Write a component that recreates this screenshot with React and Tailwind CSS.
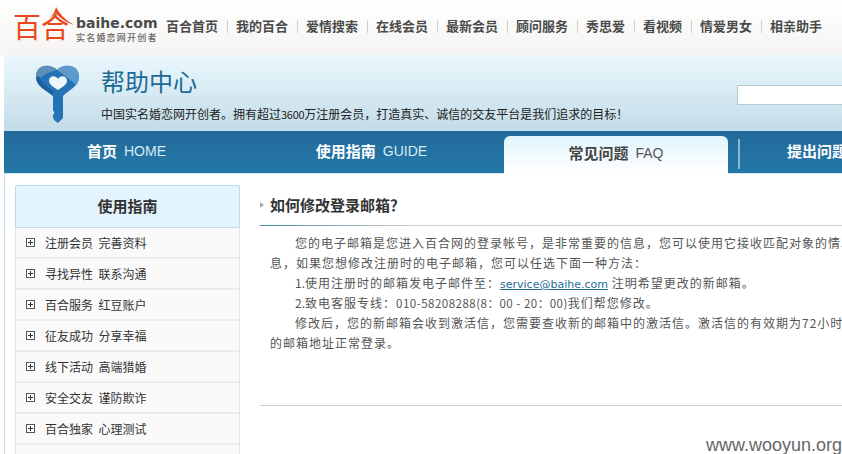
import React from 'react';

const cjk = "font-['Noto_Sans_CJK_SC','Liberation_Sans',sans-serif]";

const topLinks = [
    ['百合首页', 'w-[52px]'],
    ['我的百合', 'w-[52px]'],
    ['爱情搜索', 'w-[52px]'],
    ['在线会员', 'w-[52px]'],
    ['最新会员', 'w-[52px]'],
    ['顾问服务', 'w-[52px]'],
    ['秀思爱', 'w-[39px]'],
    ['看视频', 'w-[39px]'],
    ['情爱男女', 'w-[52px]'],
    ['相亲助手', 'w-[52px]'],
];

const sideItems = [
    '注册会员  完善资料',
    '寻找异性  联系沟通',
    '百合服务  红豆账户',
    '征友成功  分享幸福',
    '线下活动  高端猎婚',
    '安全交友  谨防欺诈',
    '百合独家  心理测试',
];

const Logo = () => (
    <div className="w-[166px] h-full pl-[13px] flex items-start relative">
        {/* 百合 wordmark */}
        <span className="mt-[8px] text-[28px] leading-[36px] font-normal tracking-[0px] text-[#e8481c] whitespace-nowrap">百合</span>
        <svg className="absolute left-[50px] top-[6px]" width="24" height="20" viewBox="0 0 24 20">
            <path d="M0 12 C3 9 5 5 6 1 C9 7 15 14 24 19 C15 16 9 11 6 7 C4 9 2 11 0 12 Z" fill="#e8481c" />
        </svg>
        <div className="ml-[7px] mt-[15px] flex flex-col">
            <span className="font-['DejaVu_Sans',sans-serif] font-bold text-[14px] leading-[17px] text-[#4a4a4a] whitespace-nowrap">baihe.com</span>
            <span className="text-[9px] leading-[11px] tracking-[1.200px] font-medium text-[#666] whitespace-nowrap">实名婚恋网开创者</span>
        </div>
    </div>
);

const KeyIcon = () => (
    <svg width="44" height="60" viewBox="0 0 44 60">
        <path d="M21 6 C26 0 43 -1 43 13 C43 22 33 26 27 32 L27 54 L22 59 L18 56 L16.500 52 L18.500 49 L17 46 L17 32 C10 26 0 22 0 13 C0 -1 16 0 21 6 Z" fill="#2473b5" />
        <path d="M21 6 C16 0 0 -1 0 13 C0 14 0 15 1 17 C6 11 13 8 21 6 Z" fill="#5f8fb9" />
        <path d="M21 6 C26 0 43 -1 43 13 C43 16 42 19 40 21 C35 16 28 11 21 6 Z" fill="#5e9bcb" />
        <path d="M0 13 C0 22 10 26 17 32 L17 27 C11 23 5 19 3 12 Z" fill="#1d5f9c" />
        <path d="M22 15 C24 11 31 11 31 17 C31 21 25 24 22 26 C19 24 13 21 13 17 C13 11 20 11 22 15 Z" fill="#eef6fa" />
    </svg>
);

const NavCell = ({ zh, en }) => (
    <div className="w-[245px] shrink-0 h-full flex items-center justify-center gap-[7px] pb-[1px] whitespace-nowrap">
        <span className="text-[15px] font-bold text-white">{zh}</span>
        <span className="font-['Liberation_Sans',sans-serif] text-[14px] text-[#d7ebf5]">{en}</span>
    </div>
);

const App = () => {
    return (
        <div className={`${cjk} relative w-[842px] h-[454px] overflow-hidden bg-white`}>
            {/* 顶部导航 */}
            <header className="h-[55px] flex bg-gradient-to-b from-white to-[#f5f4f2]">
                <Logo />
                <nav className="flex items-start pt-[17px]">
                    {topLinks.map(([label, w], i) => (
                        <div key={label} className="flex items-center">
                            {i > 0 && <span className="w-px h-[13px] bg-[#cfcfcf] ml-[9px] mr-[8px]" />}
                            <span className={`${w} text-[13px] leading-[18px] font-bold text-[#4a4a4a] whitespace-nowrap`}>{label}</span>
                        </div>
                    ))}
                </nav>
            </header>

            {/* 帮助中心 banner */}
            <div className="ml-[4px] h-[76px] flex bg-gradient-to-b from-[#ebf8fd] to-[#c3dce8]">
                <div className="w-[97px] shrink-0 pl-[32px] pt-[9px]">
                    <KeyIcon />
                </div>
                <div className="flex-1 pt-[9px] whitespace-nowrap">
                    <h1 className="text-[24px] leading-[34px] font-normal text-[#1b6a96]">帮助中心</h1>
                    <p className="mt-[7px] text-[12px] leading-[18px] text-[#222]">中国实名婚恋网开创者。拥有超过<span className="text-[11px] tracking-[-0.300px]">3600</span>万注册会员，打造真实、诚信的交友平台是我们追求的目标！</p>
                </div>
                <div className="pt-[30px]">
                    <input className="block w-[105px] h-[20px] bg-white border border-[#b5c8d2] border-r-0" />
                </div>
            </div>

            {/* 频道导航 */}
            <div className="ml-[4px] h-[43px] flex bg-gradient-to-b from-[#246a9b] to-[#2378a8] border-b border-[#cfe6ef]">
                <NavCell zh="首页" en="HOME" />
                <NavCell zh="使用指南" en="GUIDE" />
                <div className="w-[244px] shrink-0 px-[10px] h-[43px] flex items-end">
                    <div className="w-full h-[38px] rounded-t-[6px] bg-gradient-to-b from-[#e2f5fc] to-white flex items-center justify-center gap-[7px] pb-[3px]">
                        <span className="text-[15px] font-bold text-[#444]">常见问题</span>
                        <span className="font-['Liberation_Sans',sans-serif] text-[14px] text-[#555]">FAQ</span>
                    </div>
                </div>
                <span className="w-[2px] h-[30px] mt-[8px] bg-[#8fb9d0] shrink-0" />
                <div className="pl-[47px] h-full flex items-center pb-[1px] whitespace-nowrap">
                    <span className="text-[15px] font-bold text-white">提出问题</span>
                </div>
            </div>

            <div className="ml-[4px] h-[280px] flex border-l border-[#c5dbe5] pl-[10px] pt-[11px]">
                {/* 侧栏 */}
                <aside className="w-[225px] shrink-0">
                    <div className="h-[43px] flex items-center justify-center pb-[1px] rounded-t-[2px] border border-[#b8dfe8] bg-[#e3f4fc] text-[15px] font-bold text-[#333]">使用指南</div>
                    <ul className="border-r border-l border-[#e6e6e6] bg-[#fafafa]">
                        {sideItems.map((item) => (
                            <li key={item} className="h-[31px] flex items-center pl-[10px] border-b-2 border-[#ebebeb]">
                                <span className="relative w-[9px] h-[9px] border border-[#555] bg-white shrink-0">
                                    <span className="absolute left-[1px] top-[3px] w-[5px] h-px bg-[#333]" />
                                    <span className="absolute left-[3px] top-[1px] w-px h-[5px] bg-[#333]" />
                                </span>
                                <span className="ml-[10px] text-[12px] text-[#333] whitespace-pre">{item}</span>
                            </li>
                        ))}
                        <li className="h-[31px]" />
                    </ul>
                </aside>

                {/* 正文 */}
                <main className="ml-[20px] w-[600px] shrink-0">
                    <div className="h-[41px] flex items-center gap-[6px] border-b border-[#cccccc] relative">
                        <span className="w-0 h-0 border-y-[3px] border-y-transparent border-l-[4px] border-l-[#aaa]" />
                        <h2 className="text-[15px] font-bold text-[#333] whitespace-nowrap">如何修改登录邮箱？</h2>
                        <span className="absolute left-0 bottom-[-1px] w-[150px] h-px bg-gradient-to-r from-[#3f8aa3] to-[#cccccc]" />
                    </div>
                    <div className="h-[180px] pt-[7px] border-b border-[#cccccc] text-[12px] leading-[20px] tracking-[1px] text-[#555] whitespace-nowrap">
                        <p className="h-[20px] pl-[35px]">您的电子邮箱是您进入百合网的登录帐号，是非常重要的信息，您可以使用它接收匹配对象的情况</p>
                        <p className="h-[20px] pl-[10px]">息，如果您想修改注册时的电子邮箱，您可以任选下面一种方法：</p>
                        <p className="h-[20px] pl-[35px]"><span className="tracking-normal">1.</span>使用注册时的邮箱发电子邮件至：<span className="font-['DejaVu_Sans',sans-serif] text-[11px] leading-none tracking-normal text-[#1f6f97] underline">service@baihe.com</span> 注明希望更改的新邮箱。</p>
                        <p className="h-[20px] pl-[35px]"><span className="tracking-normal">2.</span>致电客服专线：<span className="text-[11.500px] tracking-[0.500px]">010-58208288(8：00 - 20：00)</span>我们帮您修改。</p>
                        <p className="h-[20px] pl-[35px]">修改后，您的新邮箱会收到激活信，您需要查收新的邮箱中的激活信。激活信的有效期为72小时</p>
                        <p className="h-[20px] pl-[10px]">的邮箱地址正常登录。</p>
                    </div>
                </main>
            </div>

            {/* 水印 */}
            <span className="absolute right-0 bottom-[-1px] font-['Liberation_Sans',sans-serif] text-[18px] leading-[20px] text-[#666]">www.wooyun.org</span>
        </div>
    );
};

export default App;
